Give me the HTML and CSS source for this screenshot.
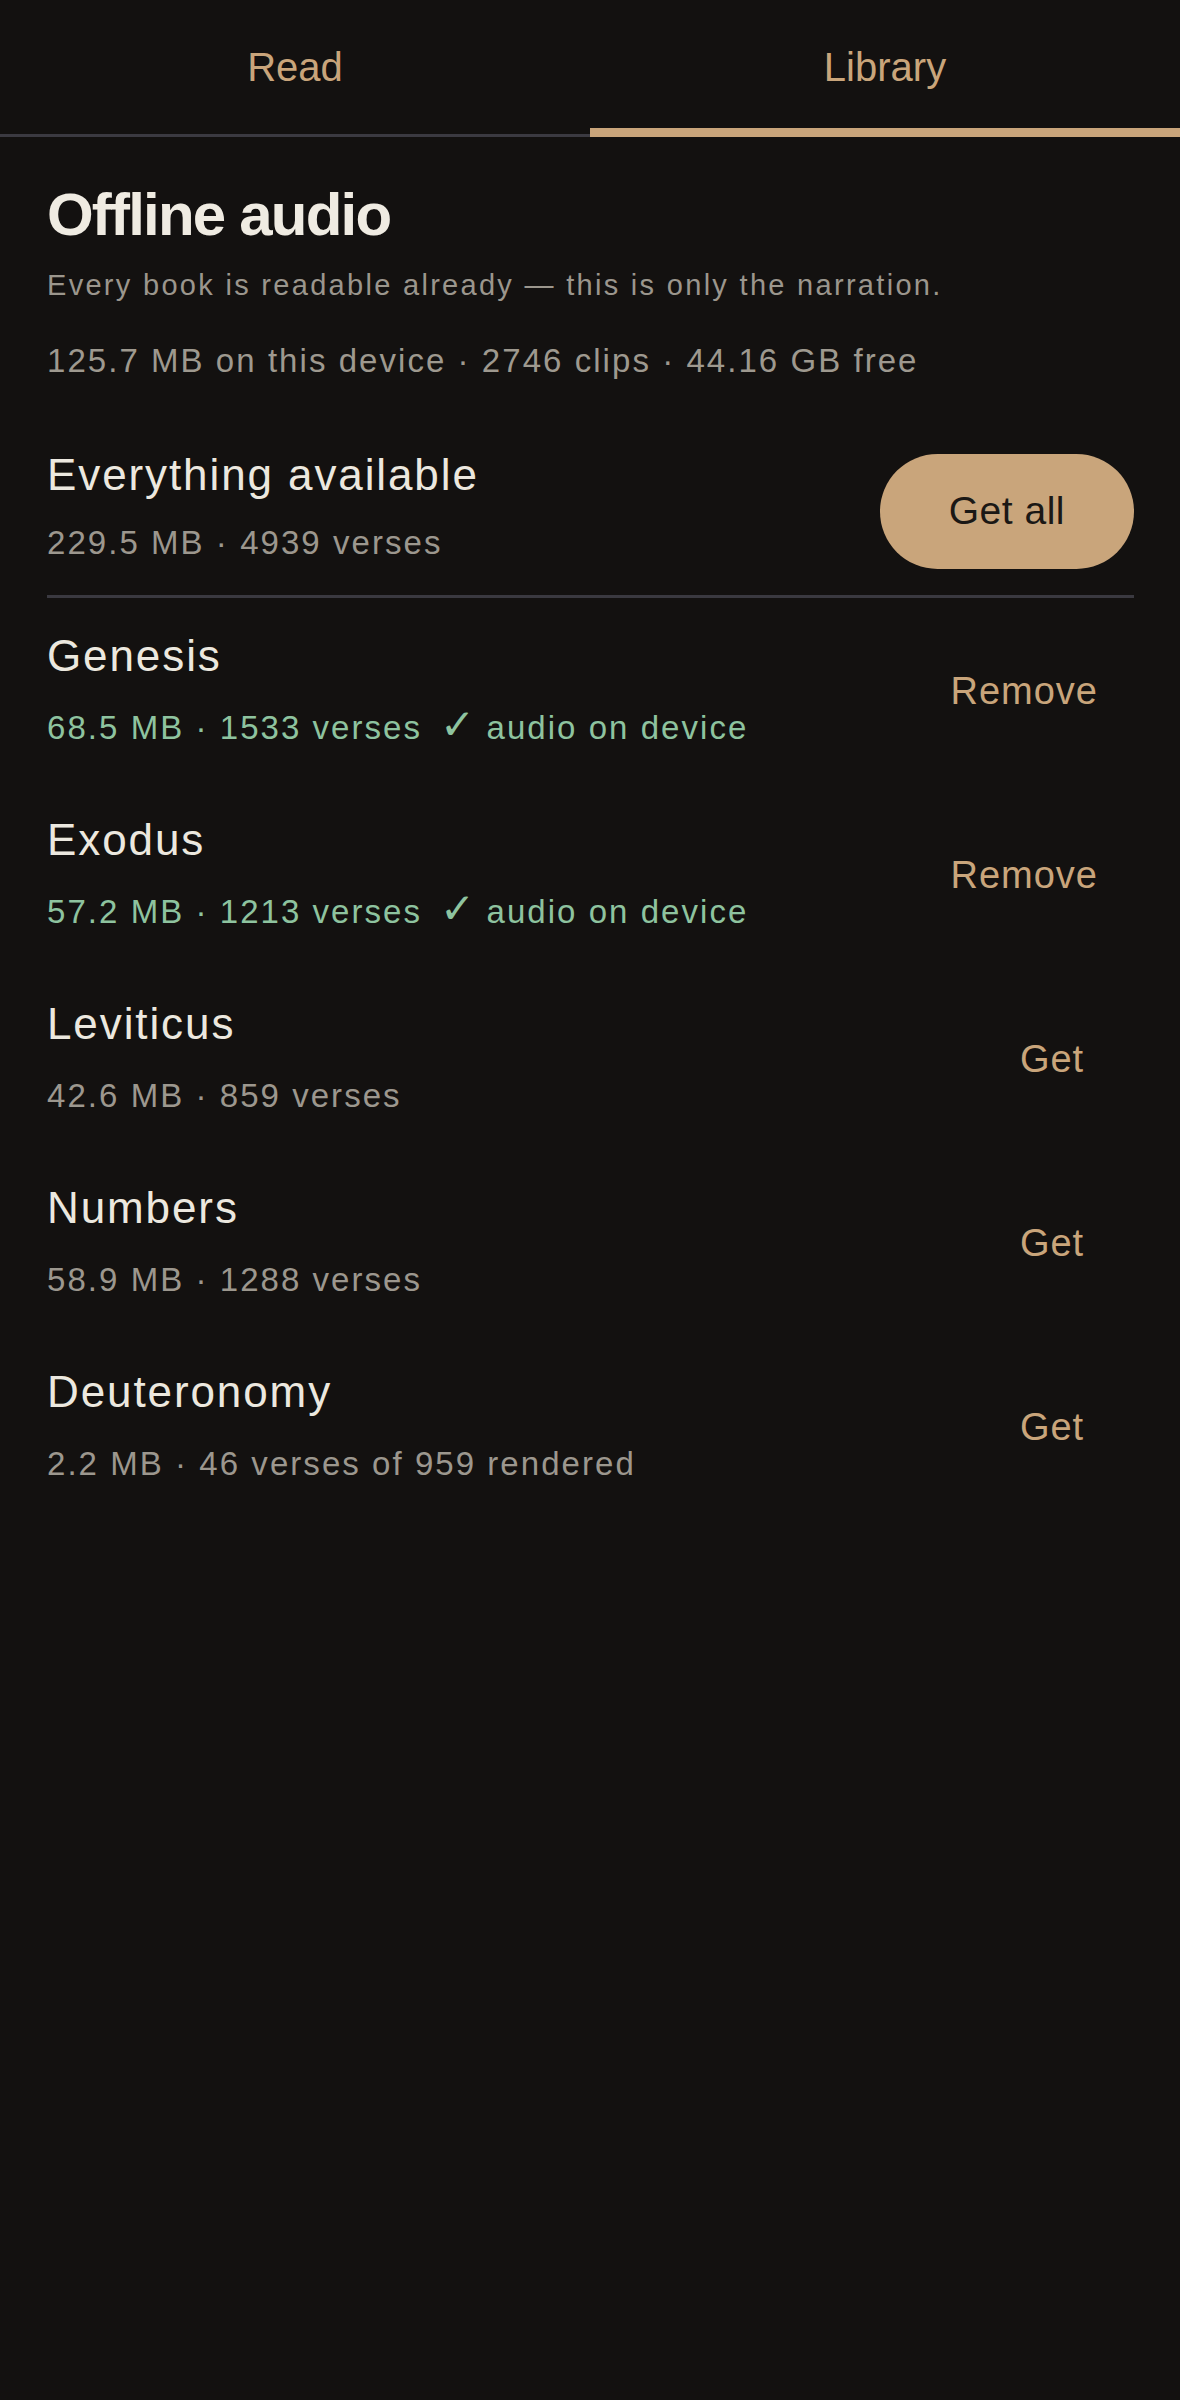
FILE: index.html
```html
<!DOCTYPE html>
<html lang="en">
<head>
<meta charset="utf-8">
<title>Library — Offline audio</title>
<link rel="stylesheet" href="styles.css">
</head>
<body>
<nav class="tabs">
  <div class="tab">Read</div>
  <div class="tab tab-active">Library</div>
</nav>
<main class="content">
  <h1 class="heading">Offline audio</h1>
  <p class="subtitle">Every book is readable already — this is only the narration.</p>
  <p class="storage">125.7 MB on this device · 2746 clips · 44.16 GB free</p>

  <section class="all-row">
    <div class="info info-all">
      <div class="title">Everything available</div>
      <div class="meta">229.5 MB · 4939 verses</div>
    </div>
    <button class="btn-pill">Get all</button>
  </section>

  <ul class="books">
    <li class="book">
      <div class="info">
        <div class="title">Genesis</div>
        <div class="meta meta-done">68.5 MB · 1533 verses<span class="ondevice"><span class="check">✓</span> audio on device</span></div>
      </div>
      <button class="btn-text">Remove</button>
    </li>
    <li class="book">
      <div class="info">
        <div class="title">Exodus</div>
        <div class="meta meta-done">57.2 MB · 1213 verses<span class="ondevice"><span class="check">✓</span> audio on device</span></div>
      </div>
      <button class="btn-text">Remove</button>
    </li>
    <li class="book">
      <div class="info">
        <div class="title">Leviticus</div>
        <div class="meta">42.6 MB · 859 verses</div>
      </div>
      <button class="btn-text">Get</button>
    </li>
    <li class="book">
      <div class="info">
        <div class="title">Numbers</div>
        <div class="meta">58.9 MB · 1288 verses</div>
      </div>
      <button class="btn-text">Get</button>
    </li>
    <li class="book">
      <div class="info">
        <div class="title">Deuteronomy</div>
        <div class="meta">2.2 MB · 46 verses of 959 rendered</div>
      </div>
      <button class="btn-text">Get</button>
    </li>
  </ul>
</main>
</body>
</html>
```
FILE: styles.css
```css
* { box-sizing: border-box; }

html, body {
  margin: 0;
  padding: 0;
  background: #131110;
}

body {
  font-family: "Liberation Sans", Arial, "DejaVu Sans", sans-serif;
  color: #ece8df;
  min-height: 2400px;
}

.tabs {
  display: flex;
  height: 137px;
  border-bottom: 3px solid #3b3a41;
}

.tab {
  position: relative;
  flex: 1;
  display: flex;
  align-items: center;
  justify-content: center;
  font-size: 40px;
  color: #c9a57b;
}

.tab-active::after {
  content: "";
  position: absolute;
  left: 0;
  right: 0;
  bottom: -3px;
  height: 9px;
  background: #c9a57b;
}

.content {
  padding: 0 46px 0 47px;
}

.heading {
  margin: 42px 0 0;
  font-size: 60px;
  line-height: 72px;
  font-weight: 700;
  letter-spacing: -1.8px;
  color: #efebe2;
}

.subtitle {
  margin: 16px 0 0;
  font-size: 29px;
  line-height: 36px;
  letter-spacing: 2.3px;
  color: #9b968d;
}

.storage {
  margin: 38px 0 0;
  font-size: 33px;
  line-height: 40px;
  letter-spacing: 2.05px;
  color: #9e998f;
}

.all-row {
  display: flex;
  align-items: center;
  justify-content: space-between;
  margin-top: 68px;
  padding-bottom: 22px;
  border-bottom: 3px solid #3a3940;
}

.info {
  display: flex;
  flex-direction: column;
}

.info-all {
  gap: 22px;
  padding-bottom: 10px;
}

.title {
  font-size: 44px;
  line-height: 52px;
  letter-spacing: 1.9px;
  color: #ece8df;
}

.meta {
  font-size: 33px;
  line-height: 40px;
  letter-spacing: 2.05px;
  color: #9c978e;
}

.meta-done {
  color: #8ec39f;
}

.ondevice {
  margin-left: 18px;
}

.check {
  font-family: "DejaVu Sans", sans-serif;
  font-size: 42px;
  font-weight: 700;
  line-height: 0;
  letter-spacing: 0;
}

.btn-pill {
  flex: none;
  height: 115px;
  padding: 0 69px;
  border: 0;
  border-radius: 58px;
  background: #c9a57b;
  color: #1b1815;
  font-family: "Liberation Sans", Arial, sans-serif;
  font-size: 39px;
  letter-spacing: 0.5px;
}

.books {
  list-style: none;
  margin: 0;
  padding: 0;
}

.book {
  display: flex;
  align-items: center;
  justify-content: space-between;
  padding: 32px 0 34px;
}

.book .info {
  gap: 26px;
}

.btn-text {
  flex: none;
  min-width: 164px;
  padding: 4px 36px 0;
  border: 0;
  background: none;
  color: #c9a57b;
  font-family: "Liberation Sans", Arial, sans-serif;
  font-size: 38px;
  letter-spacing: 1px;
  text-align: center;
}
```
